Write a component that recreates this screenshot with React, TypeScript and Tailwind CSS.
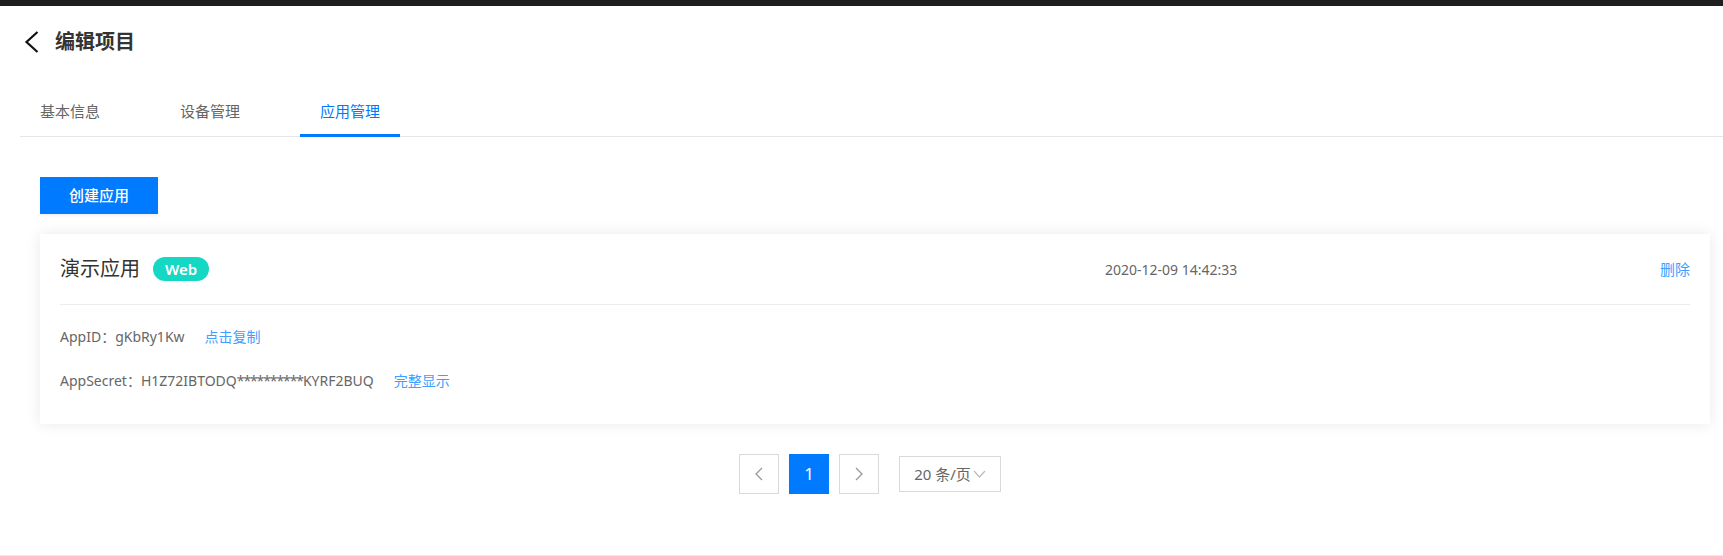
import React from "react";

// Tabs shown under the page title
const tabs = ["基本信息", "设备管理", "应用管理"];

interface AppItem {
  name: string;
  type: string;
  createdAt: string;
  appId: string;
  secretHead: string;
  secretTail: string;
}

const apps: AppItem[] = [
  {
    name: "演示应用",
    type: "Web",
    createdAt: "2020-12-09 14:42:33",
    appId: "gKbRy1Kw",
    secretHead: "H1Z72IBTODQ",
    secretTail: "KYRF2BUQ",
  },
];

const ChevronLeft = ({ className }: { className?: string }) => (
  <svg className={className} viewBox="0 0 15 22" fill="none">
    <path d="M13.5 1L2.5 11l11 10" stroke="currentColor" strokeWidth="2.2" />
  </svg>
);

const App: React.FC = () => {
  const activeTab = 2;

  return (
    <div
      className="h-[556px] bg-white border-b border-[#ececec] text-[#333]"
      style={{ fontFamily: '"Noto Sans", "Noto Sans CJK SC", sans-serif' }}
    >
      <div className="h-[6px] bg-[#1f1f1f]" />

      {/* page header */}
      <div className="h-[72px] flex items-center pl-[24px]">
        <ChevronLeft className="w-[15px] h-[22px] text-[#111]" />
        <h1 className="ml-[16px] text-[20px] font-bold text-[#333] leading-none">编辑项目</h1>
      </div>

      {/* tabs */}
      <div className="mt-[10px] ml-[20px] flex gap-[40px] border-b border-[#e6e6e6]">
        {tabs.map((tab, i) => (
          <div
            key={tab}
            className={
              i === activeTab
                ? "w-[100px] h-[49px] -mb-px flex items-center justify-center border-b-[3px] border-[#0079fe] text-[15px] text-[#0079fe]"
                : "w-[100px] h-[49px] -mb-px flex items-center justify-center border-b-[3px] border-transparent text-[15px] text-[#666]"
            }
          >
            {tab}
          </div>
        ))}
      </div>

      <div className="pl-[40px] pr-[13px]">
        <button className="mt-[40px] w-[118px] h-[37px] bg-[#007aff] text-white text-[15px] font-medium shadow-[0_2px_3px_rgba(0,0,0,0.06)]">
          创建应用
        </button>

        {apps.map((app) => (
          <div key={app.appId} className="mt-[20px] bg-white px-[20px] shadow-[0_0_14px_rgba(0,0,0,0.09)]">
            <div className="h-[71px] flex items-center border-b border-[#ececec]">
              <div className="flex-1 flex items-center">
                <span className="text-[20px] text-[#333] leading-none">{app.name}</span>
                <span className="ml-[13px] h-[24px] w-[56px] rounded-full bg-[#14d7c4] text-white text-[15px] font-semibold flex items-center justify-center">
                  {app.type}
                </span>
              </div>
              <div className="w-[555px] text-[14px] text-[#666]">{app.createdAt}</div>
              <button className="text-[15px] text-[#409eff]">删除</button>
            </div>
            <div className="pt-[9px] pb-[22px] text-[14px] text-[#666]">
              <div className="h-[44px] flex items-center">
                <span>AppID：{app.appId}</span>
                <span className="ml-[20px] text-[#409eff]">点击复制</span>
              </div>
              <div className="h-[44px] flex items-center">
                <span>
                  AppSecret：{app.secretHead}
                  <span className="tracking-[-1.1px]">**********</span>
                  {app.secretTail}
                </span>
                <span className="ml-[20px] text-[#409eff]">完整显示</span>
              </div>
            </div>
          </div>
        ))}
      </div>

      {/* pagination */}
      <div className="mt-[30px] ml-[17px] flex items-center justify-center gap-[10px]">
        <button className="w-[40px] h-[40px] border border-[#d9d9d9] flex items-center justify-center text-[#999]">
          <svg className="w-[10px] h-[14px]" viewBox="0 0 10 14" fill="none">
            <path d="M8 1L2 7l6 6" stroke="currentColor" strokeWidth="1.3" />
          </svg>
        </button>
        <button className="w-[40px] h-[40px] bg-[#007aff] text-white text-[17px] flex items-center justify-center">1</button>
        <button className="w-[40px] h-[40px] border border-[#d9d9d9] flex items-center justify-center text-[#999]">
          <svg className="w-[10px] h-[14px]" viewBox="0 0 10 14" fill="none">
            <path d="M2 1l6 6-6 6" stroke="currentColor" strokeWidth="1.3" />
          </svg>
        </button>
        <div className="ml-[10px] w-[102px] h-[36px] border border-[#d9d9d9] flex items-center justify-center text-[15px] text-[#666]">
          <span>20 条/页</span>
          <svg className="ml-[2px] w-[13px] h-[8px]" viewBox="0 0 13 8" fill="none">
            <path d="M1 1l5.5 6L12 1" stroke="#bbb" strokeWidth="1.2" />
          </svg>
        </div>
      </div>
    </div>
  );
};

export default App;
